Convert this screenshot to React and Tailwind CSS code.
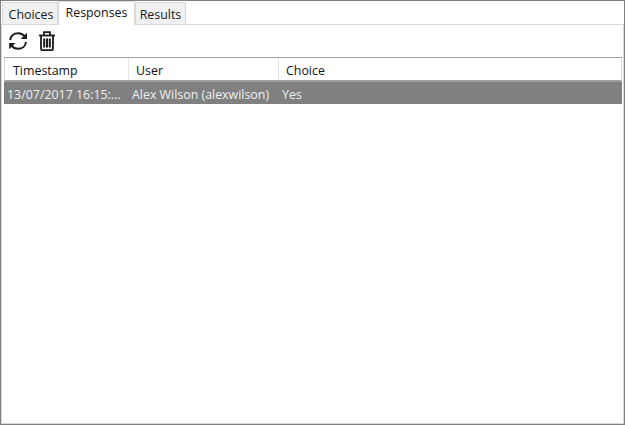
import React from 'react';

const font = { fontFamily: '"Open Sans", "Noto Sans", sans-serif' };

function RefreshIcon() {
  return (
    <svg width="19" height="20" viewBox="0 0 19 20" fill="none" stroke="#1a1a1a" strokeWidth="2">
      <path d="M1.200 9C1.700 5 5 2.200 9.200 2.200c2.800 0 5 1.200 6.500 3.200" />
      <path d="M17 11C16.500 15 13.200 17.800 9 17.800c-2.800 0-5-1.200-6.500-3.200" />
      <path d="M18 1.800V8h-6.200z" fill="#1a1a1a" stroke="none" />
      <path d="M0.200 18.200V12h6.200z" fill="#1a1a1a" stroke="none" />
    </svg>
  );
}

function TrashIcon() {
  return (
    <svg width="16" height="20" viewBox="0 0 16 20" fill="none" stroke="#1a1a1a" strokeWidth="1.800">
      <path d="M0 4.500h16" />
      <path d="M5 4V1.200h6V4" />
      <path d="M2 4.500v13.300a1.500 1.500 0 0 0 1.500 1.400h9a1.500 1.500 0 0 0 1.500-1.400V4.500" />
      <path d="M5.200 7.500v9M8 7.500v9M10.800 7.500v9" strokeWidth="2" />
    </svg>
  );
}

export default function App() {
  return (
    <div className="w-[625px] h-[425px] bg-white border border-[#808080] flex flex-col overflow-hidden text-[12.400px] leading-[16px]" style={font}>
      <div className="flex items-end h-[23px] pl-[1px] shrink-0">
        <div className="h-[22px] w-[56px] bg-[#f0f0f0] border border-b-0 border-[#d9d9d9] flex items-center justify-center pt-[2px] pl-[2px] text-[#1a1a1a]">Choices</div>
        <div className="h-[24px] w-[77px] -mb-[1px] relative z-10 bg-white border-x border-t border-[#d9d9d9] flex items-start pt-[3px] justify-center text-[#111]">Responses</div>
        <div className="h-[22px] w-[51px] bg-[#f0f0f0] border border-b-0 border-[#d9d9d9] flex items-center justify-center pt-[2px] text-[#1a1a1a]">Results</div>
      </div>
      <div className="flex-1 border border-[#d9d9d9] flex flex-col min-h-0">
        <div className="h-[32px] flex items-center gap-[11px] pl-[7px] shrink-0">
          <RefreshIcon />
          <TrashIcon />
        </div>
        <div className="ml-[2px] mr-[1px] border-t border-[#a0a0a0] shrink-0">
          <div className="flex h-[24px] border-b-2 border-[#a0a0a0] text-[#111] border-l border-r border-l-[#d9d9d9] border-r-[#d9d9d9]">
            <div className="w-[124px] border-r border-[#e5e5e5] pl-[8px] flex items-center pt-[3px]">Timestamp</div>
            <div className="w-[150px] border-r border-[#e5e5e5] pl-[7px] flex items-center pt-[3px]">User</div>
            <div className="flex-1 pl-[7px] flex items-center pt-[3px]">Choice</div>
          </div>
          <div className="flex h-[22px] bg-[#808080] text-[#f0f0f0] items-center pt-[4px]">
            <div className="w-[125px] pl-[3px] whitespace-nowrap">13/07/2017 16:15:...</div>
            <div className="w-[150px] pl-[3px] whitespace-nowrap">Alex Wilson (alexwilson)</div>
            <div className="flex-1 pl-[3px]">Yes</div>
          </div>
        </div>
      </div>
    </div>
  );
}
